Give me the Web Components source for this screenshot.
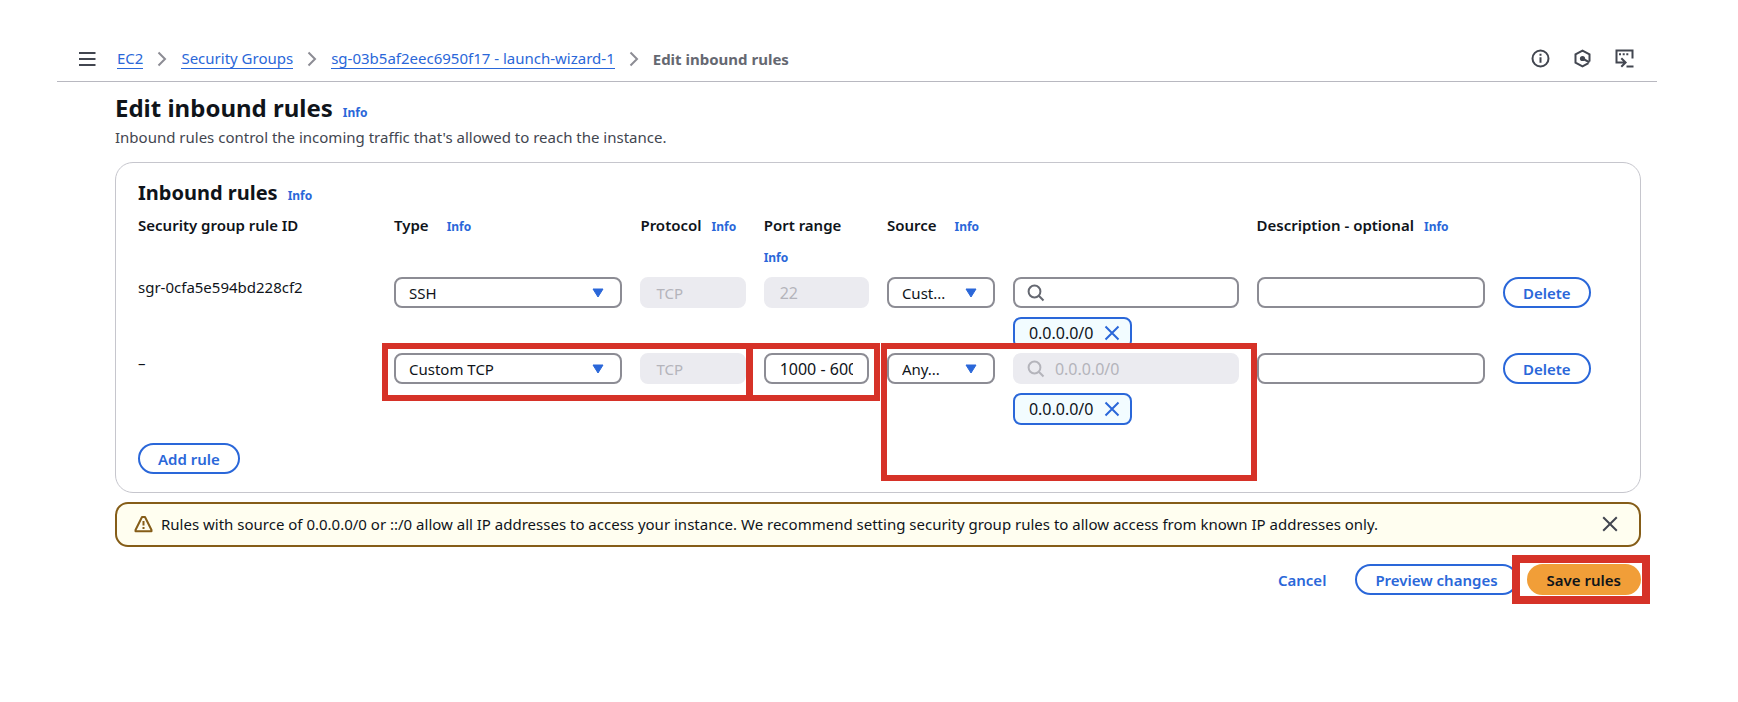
<!DOCTYPE html>
<html lang="en">
<head>
<meta charset="utf-8">
<title>Edit inbound rules | EC2</title>
<style>
body {
  margin: 0;
  background: #fff;
  color: #0f141a;
  font: 15px/20px "Noto Sans", "Open Sans", sans-serif;
  --blue: #2a67d9;
  --grey: #424650;
  --field-border: #8c8c94;
  --mark: #d63228;
}
</style>
</head>
<body>
<inbound-rules-page></inbound-rules-page>

<script>
const define = (name, html, setup) => {
  const template = document.createElement('template');
  template.innerHTML = html;
  customElements.define(name, class extends HTMLElement {
    connectedCallback() {
      if (this.shadowRoot) return;
      const root = this.attachShadow({ mode: 'open' });
      root.append(template.content.cloneNode(true));
      if (setup) setup(root, this);
    }
  });
};

define('info-link', `
<style>
:host { display: inline-block; }
a { color: var(--blue); font-size: 12px; font-weight: 700; text-decoration: none; }
</style>
<a href="#info">Info</a>`);

/* Pill button: outlined, link or primary */
define('pill-button', `
<style>
:host { display: inline-block; }
button {
  box-sizing: border-box; height: 31px; padding: 0 18px;
  border: 2px solid var(--blue); border-radius: 16px;
  background: #fff; color: var(--blue);
  font: 600 15px/20px "Noto Sans", "Open Sans", sans-serif;
  white-space: nowrap; cursor: pointer;
}
:host([variant=link]) button { border-color: transparent; background: none; }
:host([variant=primary]) button { border-color: #f19e38; background: #f19e38; color: #0f141a; }
</style>
<button type="button"><slot></slot></button>`);

/* Drop-down with a blue caret */
define('select-field', `
<style>
:host { display: grid; align-items: center; }
select, svg { grid-area: 1 / 1; }
select {
  box-sizing: border-box; width: 100%; height: 31px; padding: 0 42px 0 13px;
  appearance: none; border: 2px solid var(--field-border); border-radius: 8px;
  background: #fff; color: #0f141a;
  font: 15px/20px "Noto Sans", "Open Sans", sans-serif;
}
svg { justify-self: end; margin-right: 18px; pointer-events: none; }
</style>
<select><option></option></select>
<svg width="12" height="10" viewBox="0 0 12 10"><path d="M1 1h10L6 9z" fill="#2a67d9" stroke="#2a67d9" stroke-linejoin="round"/></svg>`,
(root, host) => {
  root.querySelector('option').textContent = host.getAttribute('value');
  root.querySelector('select').setAttribute('aria-label', host.getAttribute('label'));
});

/* Text box, optionally with a search glyph */
define('text-field', `
<style>
:host { display: grid; align-items: center; }
input, svg { grid-area: 1 / 1; }
input {
  box-sizing: border-box; width: 100%; min-width: 0; height: 31px; padding: 0 14px;
  border: 2px solid var(--field-border); border-radius: 8px;
  background: #fff; color: #0f141a;
  font: 15px/20px "Noto Sans", "Open Sans", sans-serif;
}
input:disabled { border-color: #ebebf0; background: #ebebf0; color: #b4b4bb; }
input::placeholder { color: #b4b4bb; opacity: 1; }
svg { display: none; margin-left: 14px; pointer-events: none; color: #656871; }
:host([numeric]) input { font-size: 16px; }
:host([search]) svg { display: block; }
:host([search]) input { padding-left: 40px; }
:host([disabled]) svg { color: #b4b4bb; }
</style>
<input type="text">
<svg width="18" height="18" viewBox="0 0 18 18" fill="none" stroke="currentColor" stroke-width="2"><circle cx="7.5" cy="7.5" r="5.9"/><path d="M11.8 11.8l4.7 4.7"/></svg>`,
(root, host) => {
  const input = root.querySelector('input');
  input.value = host.getAttribute('value') || '';
  input.placeholder = host.getAttribute('placeholder') || '';
  input.disabled = host.hasAttribute('disabled');
  input.setAttribute('aria-label', host.getAttribute('label'));
});

/* Removable address chip */
define('address-token', `
<style>
:host {
  box-sizing: border-box; display: inline-flex; align-items: center; gap: 11px;
  height: 32px; padding: 0 10px 0 14px;
  border: 2px solid var(--blue); border-radius: 8px; background: #f2fcff;
  font-size: 16px;
}
button { display: flex; padding: 0; border: 0; background: none; color: var(--blue); }
</style>
<slot></slot>
<button type="button" aria-label="Remove"><svg width="16" height="16" viewBox="0 0 16 16" fill="none" stroke="currentColor" stroke-width="2"><path d="M1.5 1.5l13 13M14.5 1.5l-13 13"/></svg></button>`);

/* Red frame drawn over the part of the screen it calls out */
define('mark-frame', `
<style>
:host {
  box-sizing: border-box; position: absolute; z-index: 1;
  border: 6px solid var(--mark); pointer-events: none;
}
</style>`);

/* Breadcrumb trail and tool icons */
define('page-nav', `
<style>
:host {
  display: flex; align-items: center; justify-content: space-between;
  height: 45px; margin: 36px 81px 0 57px; padding: 0 23px 0 22px;
  border-bottom: 1px solid #b8b8c0;
}
button { display: flex; padding: 0; border: 0; background: none; color: var(--grey); }
.trail, .tools, ol { display: flex; align-items: center; }
.trail { gap: 21px; }
.tools { gap: 23px; }
ol { gap: 14px; margin: 0; padding: 0; list-style: none; }
li { display: flex; align-items: center; gap: 14px; }
a { border-bottom: 1px solid var(--blue); color: var(--blue); text-decoration: none; line-height: 19px; }
[aria-current] { color: #656871; font-weight: 700; }
</style>
<nav class="trail" aria-label="Breadcrumbs">
  <button type="button" aria-label="Open navigation"><svg width="17" height="14" viewBox="0 0 17 14" stroke="currentColor" stroke-width="2"><path d="M0 1h16.500M0 7h16.500M0 13h16.500"/></svg></button>
  <ol>
    <li><a href="#ec2">EC2</a><svg width="10" height="16" viewBox="0 0 10 16" fill="none" stroke="#8c8c94" stroke-width="2"><path d="M1.500 1.500L8 8l-6.500 6.500"/></svg></li>
    <li><a href="#groups">Security Groups</a><svg width="10" height="16" viewBox="0 0 10 16" fill="none" stroke="#8c8c94" stroke-width="2"><path d="M1.500 1.500L8 8l-6.500 6.500"/></svg></li>
    <li><a href="#group">sg-03b5af2eec6950f17 - launch-wizard-1</a><svg width="10" height="16" viewBox="0 0 10 16" fill="none" stroke="#8c8c94" stroke-width="2"><path d="M1.500 1.500L8 8l-6.500 6.500"/></svg></li>
    <li aria-current="page">Edit inbound rules</li>
  </ol>
</nav>
<div class="tools">
  <button type="button" aria-label="Help"><svg width="19" height="19" viewBox="0 0 19 19" fill="none" stroke="currentColor" stroke-width="2"><circle cx="9.500" cy="9.500" r="8"/><path d="M9.500 8.200v5.600M9.500 4.800v2"/></svg></button>
  <button type="button" aria-label="Diagnostics"><svg width="19" height="19" viewBox="0 0 19 19" fill="none" stroke="currentColor" stroke-width="2"><path d="M16.500 12.500V5.400L9.500 1.700 2.500 5.400v8.200l7 3.700 6-3.200"/><circle cx="9.500" cy="9.500" r="2.600" fill="currentColor" stroke="none"/><path d="M9.500 9.500l7 3.800"/></svg></button>
  <button type="button" aria-label="CloudShell"><svg width="19" height="19" viewBox="0 0 19 19" fill="none" stroke="currentColor" stroke-width="2"><path d="M17.500 9.500v-8h-16v12h8.500M6.300 9.200l4.300 4.300-4.300 4.300M11.500 17.500h7"/><path d="M4 5.200h2M7.700 5.200h2M11.300 5.200h2"/></svg></button>
</div>`);

/* Table of rules with its editing controls */
define('rules-editor', `
<style>
:host {
  display: block; margin-top: 15px; padding: 16px 22px 18px;
  border: 1px solid #c6c6cd; border-radius: 18px;
}
header { display: flex; align-items: baseline; gap: 10px; margin-bottom: 3px; }
h2 { margin: 0; font-size: 20px; line-height: 28px; }
table, thead, tbody { display: block; }
tr {
  display: grid; position: relative;
  grid-template-columns: 256px minmax(0, 2fr) minmax(0, 1fr) minmax(0, 1fr) minmax(0, 3fr) minmax(0, 2fr) 115px;
}
th {
  display: flex; flex-wrap: wrap; align-content: start; column-gap: 10px;
  padding: 0 16px 4px 0; line-height: 31px; font-weight: 600; text-align: left; white-space: nowrap;
}
th.wide { column-gap: 18px; }
tbody tr { min-height: 76px; }
td { position: relative; padding: 0 18px 0 0; }
.source { display: grid; grid-template-columns: 108px minmax(0, 1fr); align-content: start; gap: 9px 18px; }
address-token { grid-column: 2; justify-self: start; }
.type-mark { top: -10px; left: -12px; width: 150%; height: 58px; }
.port-mark { top: -10px; left: -17px; right: 7px; height: 58px; }
.source-mark { top: -10px; left: -6px; right: 0; height: 138px; }
footer { margin-top: 14px; }
footer pill-button { display: block; }
</style>
<header><h2>Inbound rules</h2><info-link></info-link></header>
<table>
  <thead><tr>
    <th scope="col">Security group rule ID</th>
    <th scope="col" class="wide">Type <info-link></info-link></th>
    <th scope="col">Protocol <info-link></info-link></th>
    <th scope="col">Port range <info-link></info-link></th>
    <th scope="col" class="wide">Source <info-link></info-link></th>
    <th scope="col">Description - optional <info-link></info-link></th>
    <th></th>
  </tr></thead>
  <tbody>
    <tr>
      <td>sgr-0cfa5e594bd228cf2</td>
      <td><select-field label="Type" value="SSH"></select-field></td>
      <td><text-field label="Protocol" value="TCP" disabled></text-field></td>
      <td><text-field label="Port range" value="22" numeric disabled></text-field></td>
      <td class="source">
        <select-field label="Source type" value="Cust..."></select-field>
        <text-field label="Source" search numeric></text-field>
        <address-token>0.0.0.0/0</address-token>
      </td>
      <td><text-field label="Description"></text-field></td>
      <td><pill-button>Delete</pill-button></td>
    </tr>
    <tr>
      <td>–</td>
      <td><select-field label="Type" value="Custom TCP"></select-field><mark-frame class="type-mark"></mark-frame></td>
      <td><text-field label="Protocol" value="TCP" disabled></text-field></td>
      <td><text-field label="Port range" value="1000 - 6000" numeric></text-field><mark-frame class="port-mark"></mark-frame></td>
      <td class="source">
        <select-field label="Source type" value="Any..."></select-field>
        <text-field label="Source" placeholder="0.0.0.0/0" search numeric disabled></text-field>
        <address-token>0.0.0.0/0</address-token>
        <mark-frame class="source-mark"></mark-frame>
      </td>
      <td><text-field label="Description"></text-field></td>
      <td><pill-button>Delete</pill-button></td>
    </tr>
  </tbody>
</table>
<footer><pill-button>Add rule</pill-button></footer>`);

define('warning-alert', `
<style>
:host {
  display: flex; align-items: center; gap: 8px; margin-top: 9px; padding: 10px 21px 11px 17px;
  border: 2px solid #855d18; border-radius: 13px; background: #fffef0;
}
p { flex: 1; margin: 0; }
svg { flex: none; display: block; }
button { display: flex; padding: 0; border: 0; background: none; color: var(--grey); }
</style>
<svg width="19" height="18" viewBox="0 0 19 18" fill="none" stroke="#855d18" stroke-width="2"><path d="M8 2h3l6.500 13v1.300h-16V15z" stroke-linejoin="round"/><path d="M9.500 6v4.600M9.500 12v2"/></svg>
<p><slot></slot></p>
<button type="button" aria-label="Dismiss"><svg width="16" height="16" viewBox="0 0 16 16" fill="none" stroke="currentColor" stroke-width="2"><path d="M1.200 1.200l13.600 13.600M14.800 1.200L1.200 14.800"/></svg></button>`);

/* Whole screen */
define('inbound-rules-page', `
<style>
:host { display: block; }
main { padding: 11px 97px 48px 115px; }
header { display: flex; align-items: baseline; gap: 10px; }
h1 { margin: 0; font-size: 24px; line-height: 30px; }
p { margin: 4px 0 0; color: var(--grey); }
.actions { display: flex; justify-content: flex-end; gap: 9px; margin-top: 17px; }
.save { position: relative; }
.save mark-frame { inset: -9px -9px -9px -15px; border-width: 8px; }
</style>
<page-nav></page-nav>
<main>
  <header><h1>Edit inbound rules</h1><info-link></info-link></header>
  <p>Inbound rules control the incoming traffic that's allowed to reach the instance.</p>
  <rules-editor></rules-editor>
  <warning-alert>Rules with source of 0.0.0.0/0 or ::/0 allow all IP addresses to access your instance. We recommend setting security group rules to allow access from known IP addresses only.</warning-alert>
  <div class="actions">
    <pill-button variant="link">Cancel</pill-button>
    <pill-button>Preview changes</pill-button>
    <div class="save"><pill-button variant="primary">Save rules</pill-button><mark-frame></mark-frame></div>
  </div>
</main>`);
</script>
</body>
</html>
